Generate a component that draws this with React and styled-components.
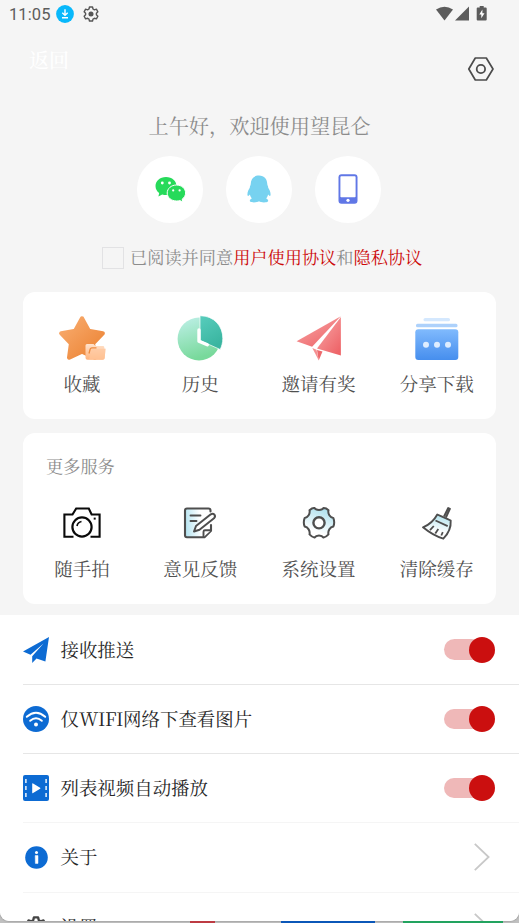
import React from 'react'
import styled, { createGlobalStyle } from 'styled-components'

const GlobalStyle = createGlobalStyle`
    * {
        box-sizing: border-box;
    }

    body {
        margin: 0;
        overflow: hidden;
        background: #c4c4c4;
        font-family: "Noto Serif CJK SC", "Noto Serif SC", "Liberation Serif", "Noto Sans CJK SC", serif;
        font-weight: 400;
    }

    svg {
        display: block;
        flex-shrink: 0;
        overflow: visible;
    }
`

const Page = styled.div`
    height: 923px;
    overflow: hidden;
    background: #c0c0c0;
`
const Screen = styled.div`
    height: 921px;
    overflow: hidden;
    border-radius: 0 0 9px 9px;
    background: #f5f5f5;
    box-shadow: 0 0 2px #777;
`
const StatusBar = styled.div`
    display: flex;
    align-items: center;
    justify-content: space-between;
    height: 28px;
    padding: 0 31px 0 9px;
    color: #5c5c5c;
`
const StatusGroup = styled.div`
    display: flex;
    align-items: center;
    gap: ${props => props.$gap}px;
`
const Clock = styled.span`
    width: 41px;
    font-family: Roboto, sans-serif;
    font-size: 16.5px;
    font-weight: 400;
    letter-spacing: 0.1px;
    white-space: nowrap;
`
const TopBar = styled.header`
    display: flex;
    justify-content: space-between;
    height: 82px;
    padding: 20px 25px 0 29px;
`
const Back = styled.span`
    height: 24px;
    line-height: 24px;
    font-size: 20px;
    font-weight: 500;
    color: #fff;
`
const SettingsButton = styled.div`
    padding-top: 9px;
`
const Greeting = styled.h1`
    height: 32px;
    margin: 0;
    text-align: center;
    font-size: 20.2px;
    line-height: 32px;
    font-weight: 400;
    color: #8c8c8c;
`
const LoginRow = styled.div`
    display: flex;
    justify-content: center;
    gap: 22.5px;
    padding: 14px 1px 0 0;
`
const LoginButton = styled.div`
    display: flex;
    align-items: center;
    justify-content: center;
    width: 66.5px;
    height: 66.5px;
    border-radius: 50%;
    background: #fff;
`
const Agreement = styled.div`
    display: flex;
    align-items: center;
    height: 26px;
    margin: 21.5px 0 22px;
    padding-left: 102px;
    font-size: 17.2px;
    white-space: nowrap;
    color: #8c8c8c;
`
const Checkbox = styled.span`
    width: 22px;
    height: 22px;
    margin: 2px 6px 0 0;
    border: 1.5px solid #e2e2e4;
`
const AgreementText = styled.span`
    padding-bottom: 2px;
`
const Terms = styled.span`
    color: #cc0808;
`
const Card = styled.section`
    height: ${props => props.$height}px;
    margin: 0 23px ${props => props.$bottom}px;
    border-radius: 12px;
    background: #fff;
`
const CardTitle = styled.h2`
    height: 62px;
    margin: 0;
    padding: 3px 0 0 23px;
    font-size: 17.2px;
    line-height: 60px;
    font-weight: 400;
    color: #8c8c8c;
`
const Grid = styled.div`
    display: grid;
    grid-template-columns: repeat(4, 1fr);
    padding-top: ${props => props.$top}px;
`
const GridItem = styled.div`
    display: flex;
    flex-direction: column;
    align-items: center;
`
const IconBox = styled.div`
    display: flex;
    align-items: center;
    justify-content: center;
    height: ${props => props.$height}px;
`
const GridLabel = styled.span`
    height: 24px;
    margin-top: ${props => props.$top}px;
    font-size: 18.5px;
    line-height: 24px;
    color: #505050;
`
const List = styled.div`
    padding: 0.6px 0 0 23px;
    background: #fff;
`
const ListRow = styled.div`
    display: flex;
    align-items: center;
    height: 69.25px;
    padding-right: ${props => (props.$link ? 29 : 24)}px;
    border-bottom: 1px solid ${props => (props.$light ? '#f5f5f5' : '#e6e6e6')};
`
const ListIcon = styled.div`
    display: flex;
    justify-content: center;
    width: 26px;
    margin-right: 11.5px;
`
const ListLabel = styled.span`
    flex: 1;
    padding-bottom: 2px;
    font-size: 18.45px;
    line-height: 24px;
    color: #262626;
`
const Latin = styled.span`
    letter-spacing: -0.4px;
`
const Knob = styled.span`
    flex-shrink: 0;
    width: 26px;
    height: 26px;
    margin-left: 24.5px;
    border-radius: 50%;
    background: #cb0f0f;
`
const Track = styled.div`
    display: flex;
    align-items: center;
    width: 38px;
    height: 20.5px;
    margin-right: 13px;
    border-radius: 10.5px;
    background: #efb8b8;
`
const Dock = styled.div`
    display: flex;
    height: 2px;
    padding-left: 190px;
`
const DockItem = styled.span`
    width: ${props => props.$width}px;
    margin-right: ${props => props.$gap}px;
    background: ${props => props.$color};
`

const DownloadIcon = () => (
    <svg width="18" height="18" viewBox="0 0 18 18">
        <circle cx="9" cy="9" r="8.9" fill="#08b8fb" />
        <path d="M9 4.2v6M6.3 7.8L9 10.4l2.7-2.6M6 12.8h6" fill="none" stroke="#fff" strokeWidth="1.4" />
    </svg>
)

const gearPath = 'M9.7 1.5h4.6l.7 3 2.1 1.2 3-.9 2.2 3.9-2.2 2.2v2.3l2.2 2.2-2.2 3.9-3-.9-2.1 1.2-.7 3H9.7l-.7-3-2.1-1.2-3 .9-2.2-3.9 2.2-2.2v-2.3L1.700 8.700l2.200-3.900 3 .9L9 4.500z'

const StatusGear = () => (
    <svg width="16" height="16" viewBox="0 0 24 24">
        <path d={gearPath} fill="none" stroke="#555" strokeWidth="2.1" strokeLinejoin="round" />
        <circle cx="12" cy="12" r="3.8" fill="#555" />
    </svg>
)

const StatusIcons = () => (
    <svg width="52" height="16" viewBox="0 0 52 16">
        <path d="M0 3.6Q8.5-2 17 3.6L8.5 14.4z" fill="#5c5c5c" />
        <path d="M33 .5v14H19z" fill="#5c5c5c" />
        <path d="M43.7 0h4v1.5h2q1 0 1 1v11q0 1-1 1h-8q-1 0-1-1v-11q0-1 1-1h2z" fill="#5c5c5c" />
        <path d="M46.4 3.5l-3.1 5h2v3.8l3.2-5.1h-2.1z" fill="#fff" />
    </svg>
)

const HexIcon = () => (
    <svg width="26" height="24" viewBox="0 0 26 24">
        <path d="M7.3 1h11L25 12l-6.7 11h-11L.8 12z" fill="none" stroke="#4b4b4b" strokeWidth="1.7" strokeLinejoin="round" />
        <circle cx="12.9" cy="12" r="4.2" fill="none" stroke="#4b4b4b" strokeWidth="1.8" />
    </svg>
)

const WechatIcon = () => (
    <svg width="31" height="25" viewBox="0 0 31 25">
        <path d="M11 0C4.800 0 .5 4 .5 9c0 3 1.500 5.400 3.700 7l-.8 3.400 3.800-2c1.200.4 2.500.6 4 .6C17.200 18 21.500 14 21.500 9S17.200 0 11 0z" fill="#26da5a" />
        <path d="M21.500 8c-5.200 0-9.300 3.500-9.300 8s4.100 8 9.300 8c1.300 0 2.300-.1 3.300-.5l3 1.500-.6-2.900c2-1.400 3.400-3.600 3.400-6.100 0-4.500-4-8-9.100-8z" fill="#26da5a" stroke="#fff" strokeWidth="1" />
        <circle cx="7.300" cy="6" r="1.400" fill="#fff" />
        <circle cx="14.500" cy="6" r="1.400" fill="#fff" />
        <circle cx="18.200" cy="13.400" r="1.100" fill="#fff" />
        <circle cx="24.600" cy="13.400" r="1.100" fill="#fff" />
    </svg>
)

const QQIcon = () => (
    <svg width="24" height="28" viewBox="0 0 24 28">
        <path d="M12 .5C6.600.5 3.800 4 3.700 9.300c0 1.300-1 2-.9 3.400C1.400 14.700.1 17.800.5 20.200c.2 1.300 1.400.8 2.300-.6.4 1.400 1 2.600 2 3.800-1.800.7-2.500 2.300-1.600 3.200 1.400 1.300 7.200 1.100 8.800-.3 1.600 1.400 7.400 1.600 8.800.3.9-.9.200-2.500-1.600-3.200 1-1.200 1.600-2.400 2-3.800.9 1.400 2.100 1.900 2.300.6.400-2.400-.9-5.500-2.300-7.500.1-1.400-.9-2.100-.9-3.400C20.200 4 17.400.5 12 .5z" fill="#77d2f0" />
    </svg>
)

const PhoneIcon = () => (
    <svg width="20" height="30" viewBox="0 0 20 30">
        <rect x=".5" y=".3" width="19" height="29.400" rx="3" fill="#6077e6" />
        <rect x="2.400" y="2.200" width="15.200" height="21" rx=".8" fill="#fff" />
        <circle cx="10" cy="26.300" r="1.600" fill="#fff" />
    </svg>
)

const StarIcon = () => (
    <svg width="48" height="48" viewBox="0 0 48 48">
        <defs>
            <linearGradient id="star" x1="0" y1="0" x2="1" y2="1">
                <stop offset="0" stopColor="#f9ad70" />
                <stop offset="1" stopColor="#eb8131" />
            </linearGradient>
            <linearGradient id="folder" x1="0" y1="0" x2="0" y2="1">
                <stop offset="0" stopColor="#ffe3cd" />
                <stop offset="1" stopColor="#ffb27a" />
            </linearGradient>
        </defs>
        <path d="M24 4.500l6.700 12.300 14 2.500-9.800 10.200 2 14-12.900-6.100-12.800 6.100 1.900-14L3.300 19.300l14-2.500z" fill="url(#star)" stroke="url(#star)" strokeWidth="4.400" strokeLinejoin="round" />
        <path d="M29 30h6.500l2 2h7.500q1.300 0 1.300 1.300v1.200H47.500l-.8 9.500q-.2 1.700-2 1.700H29.500q-2 0-2-2V31.500Q27.500 30 29 30z" fill="url(#folder)" />
        <path d="M33.500 35H47.500l-.8 9q-.2 1.700-2 1.700H31z" fill="#ffc89e" opacity=".65" />
        <path d="M31 39.500l1.200-4.500q.4-1.200 1.700-1.200H38.500" fill="none" stroke="#ee8b40" strokeWidth="1.300" />
    </svg>
)

const HistoryIcon = () => (
    <svg width="48" height="48" viewBox="0 0 48 48">
        <defs>
            <linearGradient id="dial" x1="0" y1="0" x2=".3" y2="1">
                <stop offset="0" stopColor="#bff0e9" />
                <stop offset="1" stopColor="#78d99b" />
            </linearGradient>
            <linearGradient id="slice" x1="0" y1="0" x2=".4" y2="1">
                <stop offset="0" stopColor="#58cdbd" />
                <stop offset="1" stopColor="#3ab5a0" />
            </linearGradient>
        </defs>
        <circle cx="23" cy="25" r="21.400" fill="url(#dial)" />
        <path d="M24 1.700C38.500 1.700 47 12.600 46.800 24.500c0 4-1 7.600-2.600 11L24 26.500z" fill="url(#slice)" stroke="#fff" strokeWidth=".7" />
        <path d="M23 16v11.200l8.300 3.600" fill="none" stroke="#fff" strokeWidth="3.400" strokeLinecap="round" strokeLinejoin="round" />
    </svg>
)

const InviteIcon = () => (
    <svg width="48" height="48" viewBox="0 0 48 48">
        <defs>
            <linearGradient id="plane" x1="0" y1="0" x2=".8" y2="1">
                <stop offset="0" stopColor="#f8aaaa" />
                <stop offset="1" stopColor="#ee6468" />
            </linearGradient>
        </defs>
        <path d="M45.800 2.200L1.600 27.300l15.500 5.400z" fill="url(#plane)" />
        <path d="M45.900 3v38.500L22 34.500z" fill="url(#plane)" />
        <path d="M17.300 34l6.500 12.500-2.300-10.800z" fill="#f58f91" />
        <path d="M22 36l5.500 1.600-3.800 9z" fill="#ed696c" />
    </svg>
)

const ShareIcon = () => (
    <svg width="48" height="48" viewBox="0 0 48 48">
        <defs>
            <linearGradient id="box" x1="0" y1="0" x2="0" y2="1">
                <stop offset="0" stopColor="#80bafd" />
                <stop offset="1" stopColor="#468eee" />
            </linearGradient>
        </defs>
        <rect x="10.500" y="4" width="26.500" height="3.300" rx="1.600" fill="#d4e8fe" />
        <rect x="3" y="9.800" width="41.500" height="3.400" rx="1.500" fill="#add1fb" />
        <rect x="2.300" y="15.300" width="43" height="30.800" rx="3" fill="url(#box)" />
        <circle cx="13" cy="30.700" r="3" fill="#deedff" />
        <circle cx="24" cy="30.700" r="3" fill="#deedff" />
        <circle cx="35" cy="30.700" r="3" fill="#deedff" />
    </svg>
)

const CameraIcon = () => (
    <svg width="38" height="32" viewBox="0 0 38 32">
        <path d="M10.500 29.700H1.400V7.500h8.100l3.700-6h12.600l2.800 6h8v22.200h-9.100" fill="none" stroke="#0a0a0a" strokeWidth="2.100" />
        <circle cx="19" cy="20" r="9.600" fill="none" stroke="#0a0a0a" strokeWidth="2.200" />
        <path d="M14 19q.7-3.800 4.500-4.500" fill="none" stroke="#0a0a0a" strokeWidth="1.700" />
        <rect x="30.700" y="10.600" width="2" height="2" fill="#0a0a0a" />
    </svg>
)

const FeedbackIcon = () => (
    <svg width="32" height="32" viewBox="0 0 32 32">
        <defs>
            <linearGradient id="sheet" x1="0" y1=".5" x2="1" y2=".4">
                <stop offset="0" stopColor="#b5e4f1" />
                <stop offset=".6" stopColor="#fff" />
            </linearGradient>
        </defs>
        <path d="M26.500 4.500V3.500q0-2-2-2H3Q1 1.500 1 3.500v24.800q0 2 2 2h17.500l6.500-6.500V18" fill="url(#sheet)" stroke="#4e4e4e" strokeWidth="2.100" strokeLinecap="round" strokeLinejoin="round" />
        <path d="M19.500 30v-5.200q0-1.500 1.500-1.500h6" fill="#fff" stroke="#4e4e4e" strokeWidth="1.900" />
        <path d="M6.500 8.500h10M6.500 14h6" stroke="#4e4e4e" strokeWidth="1.900" strokeLinecap="round" />
        <path d="M10 24.500l2-5.500L26.800 7.300q2.200-1.400 3.600.4t-.4 3.500L15.500 22.800z" fill="#fff" stroke="#4e4e4e" strokeWidth="2" strokeLinejoin="round" />
    </svg>
)

const SystemIcon = () => (
    <svg width="34" height="34" viewBox="0 0 34 34">
        <defs>
            <linearGradient id="cog" x1=".7" y1="0" x2=".4" y2=".8">
                <stop offset="0" stopColor="#aadfed" />
                <stop offset="1" stopColor="#fff" />
            </linearGradient>
        </defs>
        <path d="M7.500 4.200q3-2.600 5-2.200c1.300 2.500 7.700 2.500 9 0q2.600-.1 5 2.200c-.9 3.500 1.500 7.300 4.800 7.700q1.800 4.600 0 8.700c-3.300.5-5.700 4.300-4.800 7.800q-2.400 2.600-5 3.200c-1.800-2.800-7.200-2.800-9 0q-2.600-.6-5-3.200c.8-3.500-1.500-7.300-4.800-7.800q-1.800-4.100 0-8.700c3.300-.4 5.600-4.200 4.800-7.700z" fill="url(#cog)" stroke="#4e4e4e" strokeWidth="2" strokeLinejoin="round" />
        <circle cx="17" cy="16.800" r="5.600" fill="#fff" stroke="#4e4e4e" strokeWidth="2.400" />
    </svg>
)

const CleanIcon = () => (
    <svg width="32" height="34" viewBox="0 0 32 34">
        <defs>
            <linearGradient id="broom" x1=".6" y1="0" x2=".4" y2="1">
                <stop offset="0" stopColor="#b2e4ef" />
                <stop offset=".7" stopColor="#fff" />
            </linearGradient>
        </defs>
        <path d="M23 10.500l4.200-8.500 1.700.8-4 8.700" fill="#fff" stroke="#4e4e4e" strokeWidth="1.900" strokeLinejoin="round" />
        <path d="M16.300 8.500l3.600 1.600 6.300 2.800 3.500 1.600q.7 10-7.400 18.200Q12 29.500 2 21.300q9.400-3.700 14.300-12.800z" fill="url(#broom)" stroke="#4e4e4e" strokeWidth="1.900" strokeLinejoin="round" />
        <path d="M14.500 14.500l12.200 5.600M9 24.200l3.800-4.200M14.300 27.500l3-4.500M20.300 29.500l1.500-3.300" stroke="#4e4e4e" strokeWidth="1.800" />
    </svg>
)

const PushIcon = () => (
    <svg width="26" height="26" viewBox="0 0 26 26">
        <path d="M26 0L0 14.600l7.500 3.200L20.500 6.500 9.200 19.200v6.800l4.300-4.400 8.900 3z" fill="#0d6bd3" />
    </svg>
)

const WifiIcon = () => (
    <svg width="26" height="26" viewBox="0 0 26 26">
        <circle cx="13" cy="13" r="13" fill="#0d6bd3" />
        <path d="M3.800 10.800q9.200-8 18.400 0M7.200 14.800q5.800-5 11.600 0" fill="none" stroke="#fff" strokeWidth="2" strokeLinecap="round" />
        <circle cx="13" cy="18.500" r="2" fill="#fff" />
    </svg>
)

const VideoIcon = () => (
    <svg width="26" height="26" viewBox="0 0 26 26">
        <rect width="26" height="26" rx="2" fill="#0d6bd3" />
        <path d="M9.200 8.900q0-.9.900-.4l7 4.200q.8.600 0 1.100l-7 4.200q-.9.500-.9-.4z" fill="#fff" />
        <path d="M2.900 4v4M2.900 11v4M2.900 18v4M23.100 4v4M23.100 11v4M23.100 18v4" stroke="#fff" strokeWidth="1.400" />
    </svg>
)

const AboutIcon = () => (
    <svg width="23" height="23" viewBox="0 0 23 23">
        <circle cx="11.500" cy="11.500" r="11.300" fill="#0d6bd3" />
        <circle cx="11.500" cy="6.400" r="1.500" fill="#fff" />
        <path d="M10.200 9.600h2.800v7.800h-2.600z" fill="#fff" stroke="#fff" strokeWidth=".5" />
    </svg>
)

const GearIcon = () => (
    <svg width="22" height="24" viewBox="0 0 24 24">
        <path d={gearPath} fill="none" stroke="#444" strokeWidth="2.500" strokeLinejoin="round" />
        <circle cx="12" cy="12" r="4" fill="none" stroke="#444" strokeWidth="2.200" />
    </svg>
)

const Arrow = () => (
    <svg width="16" height="28" viewBox="0 0 16 28">
        <path d="M.8.800L14.600 14 .800 27.200" fill="none" stroke="#c8c8c8" strokeWidth="1.800" />
    </svg>
)

const Switch = () => (
    <Track>
        <Knob />
    </Track>
)

const shortcuts = [
    { label: '收藏', icon: <StarIcon /> },
    { label: '历史', icon: <HistoryIcon /> },
    { label: '邀请有奖', icon: <InviteIcon /> },
    { label: '分享下载', icon: <ShareIcon /> }
]

const services = [
    { label: '随手拍', icon: <CameraIcon /> },
    { label: '意见反馈', icon: <FeedbackIcon /> },
    { label: '系统设置', icon: <SystemIcon /> },
    { label: '清除缓存', icon: <CleanIcon /> }
]

const options = [
    { id: 'push', label: '接收推送', icon: <PushIcon /> },
    { id: 'wifi', label: <>仅<Latin>WIFI</Latin>网络下查看图片</>, icon: <WifiIcon /> },
    { id: 'video', label: '列表视频自动播放', icon: <VideoIcon />, light: true },
    { id: 'about', label: '关于', icon: <AboutIcon />, link: true, light: true },
    { id: 'settings', label: '设置', icon: <GearIcon />, link: true, light: true }
]

const App = () => {
    return (
        <Page>
            <GlobalStyle />
            <Screen>
                <StatusBar>
                    <StatusGroup $gap={6}>
                        <Clock>11:05</Clock>
                        <StatusGroup $gap={9}>
                            <DownloadIcon />
                            <StatusGear />
                        </StatusGroup>
                    </StatusGroup>
                    <StatusIcons />
                </StatusBar>
                <TopBar>
                    <Back>返回</Back>
                    <SettingsButton><HexIcon /></SettingsButton>
                </TopBar>
                <Greeting>上午好，欢迎使用望昆仑</Greeting>
                <LoginRow>
                    <LoginButton><WechatIcon /></LoginButton>
                    <LoginButton><QQIcon /></LoginButton>
                    <LoginButton><PhoneIcon /></LoginButton>
                </LoginRow>
                <Agreement>
                    <Checkbox />
                    <AgreementText>
                        已阅读并同意<Terms>用户使用协议</Terms>和<Terms>隐私协议</Terms>
                    </AgreementText>
                </Agreement>
                <Card $height={127} $bottom={14}>
                    <Grid $top={22}>
                        {
                            shortcuts.map(item => (
                                <GridItem key={item.label}>
                                    <IconBox $height={48}>{item.icon}</IconBox>
                                    <GridLabel $top={9}>{item.label}</GridLabel>
                                </GridItem>
                            ))
                        }
                    </Grid>
                </Card>
                <Card $height={171} $bottom={11}>
                    <CardTitle>更多服务</CardTitle>
                    <Grid $top={11}>
                        {
                            services.map(item => (
                                <GridItem key={item.label}>
                                    <IconBox $height={34}>{item.icon}</IconBox>
                                    <GridLabel $top={16}>{item.label}</GridLabel>
                                </GridItem>
                            ))
                        }
                    </Grid>
                </Card>
                <List>
                    {
                        options.map(item => (
                            <ListRow key={item.id} $link={item.link} $light={item.light}>
                                <ListIcon>{item.icon}</ListIcon>
                                <ListLabel>{item.label}</ListLabel>
                                {item.link ? <Arrow /> : <Switch />}
                            </ListRow>
                        ))
                    }
                </List>
            </Screen>
            <Dock>
                <DockItem $width={25} $gap={66} $color="#bd3b43" />
                <DockItem $width={94} $gap={28} $color="#0b57b8" />
                <DockItem $width={100} $gap={0} $color="#22a35f" />
            </Dock>
        </Page>
    )
}

export default App
